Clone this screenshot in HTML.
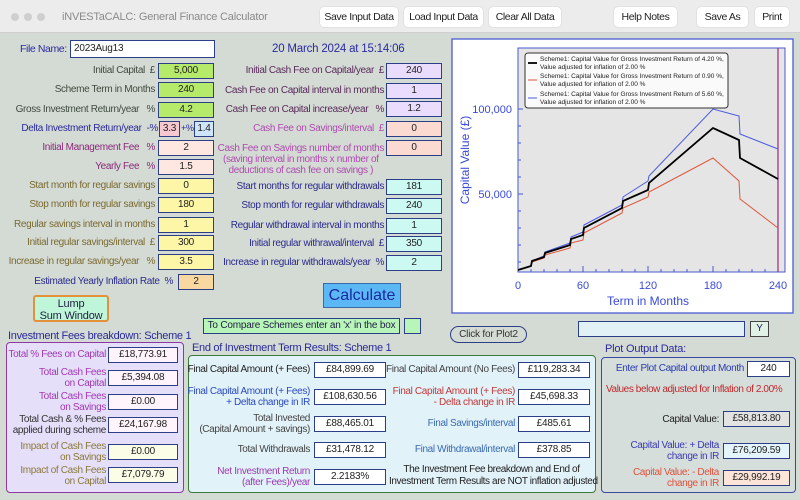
<!DOCTYPE html>
<html><head><meta charset="utf-8"><style>
*{box-sizing:border-box;margin:0;padding:0}
body{width:800px;height:500px;overflow:hidden;background:#d4dbd4;font-family:"Liberation Sans",Arial,sans-serif;font-size:10px;letter-spacing:-0.2px;position:relative;color:#333}
.a{position:absolute;white-space:nowrap}
.r{position:absolute;text-align:right;white-space:nowrap;line-height:12px;letter-spacing:-0.35px}
.b{position:absolute;border:1px solid #2c3f86;text-align:center;font-size:10px;line-height:14px;height:16px;color:#222}
.tb{position:absolute;top:7px;height:20px;background:#fff;border-radius:4px;box-shadow:0 0 1px #aaa;font-size:10.5px;line-height:20px;text-align:center;color:#222;white-space:nowrap;letter-spacing:-0.4px}
.lbl{color:#3f4a3f}
</style></head><body>
<div class="a" style="left:0;top:0;width:800px;height:33px;background:#ececec;border-bottom:1px solid #d0d0d0"></div>
<div class="a" style="left:11px;top:13px;width:8px;height:8px;border-radius:50%;background:#cfcfcf"></div>
<div class="a" style="left:24px;top:13px;width:8px;height:8px;border-radius:50%;background:#cfcfcf"></div>
<div class="a" style="left:37px;top:13px;width:8px;height:8px;border-radius:50%;background:#cfcfcf"></div>
<div class="a" style="left:62px;top:11px;font-size:11px;color:#8a8a8a">iNVESTaCALC:  General Finance Calculator</div>
<div class="tb" style="left:320px;width:78px">Save Input Data</div>
<div class="tb" style="left:404px;width:79px">Load Input Data</div>
<div class="tb" style="left:489px;width:72px">Clear All Data</div>
<div class="tb" style="left:614px;width:63px">Help Notes</div>
<div class="tb" style="left:697px;width:51px">Save As</div>
<div class="tb" style="left:755px;width:34px">Print</div>

<!-- left column -->
<div class="a" style="left:20px;top:43px;color:#2a2aa0;font-size:10.5px;letter-spacing:-0.4px">File Name:</div>
<div class="b" style="left:70px;top:40px;width:145px;height:18px;text-align:left;padding-left:3px;background:#fff;line-height:16px">2023Aug13</div>
<div class="r lbl" style="right:645px;top:65px">Initial Capital &nbsp;£</div><div class="b" style="left:158px;top:63px;width:56px;background:#b5ea6b">5,000</div>
<div class="r lbl" style="right:645px;top:84px">Scheme Term in Months</div><div class="b" style="left:158px;top:82px;width:56px;background:#b5ea6b">240</div>
<div class="r lbl" style="right:645px;top:104px">Gross Investment Return/year &nbsp;&nbsp;%</div><div class="b" style="left:158px;top:102px;width:56px;background:#b5ea6b">4.2</div>
<div class="r" style="right:642px;top:123px;color:#2a2a9a">Delta Investment Return/year &nbsp;-%</div><div class="b" style="left:159px;top:121px;width:21px;background:#f6c8cf">3.3</div><div class="a" style="left:181px;top:123px;color:#2a2a9a;font-size:9px">+%</div><div class="b" style="left:194px;top:121px;width:20px;background:#cfe5fa">1.4</div>
<div class="r" style="right:645px;top:142px;color:#8a2a7a">Initial Management Fee &nbsp;&nbsp;%</div><div class="b" style="left:158px;top:140px;width:56px;background:#fde7e0">2</div>
<div class="r" style="right:645px;top:161px;color:#8a2a7a">Yearly Fee &nbsp;&nbsp;%</div><div class="b" style="left:158px;top:159px;width:56px;background:#fde7e0">1.5</div>
<div class="r" style="right:645px;top:180px;color:#7a6a30">Start month for regular savings</div><div class="b" style="left:158px;top:178px;width:56px;background:#fdf6a6">0</div>
<div class="r" style="right:645px;top:199px;color:#7a6a30">Stop month for regular savings</div><div class="b" style="left:158px;top:197px;width:56px;background:#fdf6a6">180</div>
<div class="r" style="right:645px;top:219px;color:#7a6a30">Regular savings interval in months</div><div class="b" style="left:158px;top:217px;width:56px;background:#fdf6a6">1</div>
<div class="r" style="right:645px;top:237px;color:#7a6a30">Initial regular savings/interval &nbsp;£</div><div class="b" style="left:158px;top:235px;width:56px;background:#fdf6a6">300</div>
<div class="r" style="right:645px;top:256px;color:#7a6a30">Increase in regular savings/year &nbsp;&nbsp;%</div><div class="b" style="left:158px;top:254px;width:56px;background:#fdf6a6">3.5</div>
<div class="r" style="right:627px;top:276px;color:#2a2a8a">Estimated Yearly Inflation Rate &nbsp;%</div><div class="b" style="left:178px;top:274px;width:36px;background:#f8d7a0">2</div>
<div class="a" style="left:33px;top:295px;width:76px;height:27px;background:#bff5d8;border:2px solid #e3913a;border-radius:3px;text-align:center;line-height:12px;font-size:11px;color:#224;padding-top:1px">Lump<br>Sum Window</div>

<!-- middle column -->
<div class="a" style="left:272px;top:43px;font-size:11.5px;color:#2a2aa0">20 March 2024 at 15:14:06</div>
<div class="r" style="right:416px;top:65px;color:#5a2a5a">Initial Cash Fee on Capital/year &nbsp;£</div><div class="b" style="left:386px;top:63px;width:56px;background:#eadcfc">240</div>
<div class="r" style="right:416px;top:85px;color:#5a2a5a">Cash Fee on Capital interval in months</div><div class="b" style="left:386px;top:83px;width:56px;background:#eadcfc">1</div>
<div class="r" style="right:416px;top:104px;color:#5a2a5a">Cash Fee on Capital increase/year &nbsp;&nbsp;%</div><div class="b" style="left:386px;top:101px;width:56px;background:#eadcfc">1.2</div>
<div class="r" style="right:416px;top:123px;color:#b04ab0">Cash Fee on Savings/interval &nbsp;£</div><div class="b" style="left:386px;top:121px;width:56px;background:#fbdad2">0</div>
<div class="r" style="right:416px;top:143px;color:#b04ab0;text-align:center;line-height:11px">Cash Fee on Savings number of months<br>(saving interval in months x number of<br>deductions of cash fee on savings )</div><div class="b" style="left:386px;top:140px;width:56px;background:#fbdad2">0</div>
<div class="r" style="right:416px;top:181px;color:#2a2a8a">Start months for regular withdrawals</div><div class="b" style="left:386px;top:179px;width:56px;background:#cdf9f3">181</div>
<div class="r" style="right:416px;top:200px;color:#2a2a8a">Stop month for regular withdrawals</div><div class="b" style="left:386px;top:198px;width:56px;background:#cdf9f3">240</div>
<div class="r" style="right:416px;top:220px;color:#2a2a8a">Regular withdrawal interval in months</div><div class="b" style="left:386px;top:218px;width:56px;background:#cdf9f3">1</div>
<div class="r" style="right:416px;top:238px;color:#2a2a8a">Initial regular withrawal/interval &nbsp;£</div><div class="b" style="left:386px;top:236px;width:56px;background:#cdf9f3">350</div>
<div class="r" style="right:416px;top:257px;color:#2a2a8a">Increase in regular withdrawals/year &nbsp;%</div><div class="b" style="left:386px;top:255px;width:56px;background:#cdf9f3">2</div>
<div class="a" style="left:323px;top:283px;width:78px;height:25px;background:#5cb8f5;border:1px solid #3a6aa8;text-align:center;font-size:16px;line-height:23px;color:#1a2aa0;letter-spacing:0">Calculate</div>
<div class="a" style="left:203px;top:318px;width:197px;height:16px;background:#b8f5b8;border:1px solid #2c3f86;text-align:center;line-height:14px;color:#224">To Compare Schemes enter an 'x' in the box</div>
<div class="a" style="left:404px;top:318px;width:17px;height:16px;background:#b8f5b8;border:1px solid #2c3f86"></div>
<div class="a" style="left:450px;top:326px;width:77px;height:17px;border:1px solid #2c3f86;border-radius:9px;text-align:center;line-height:15px;color:#333">Click for Plot2</div>
<div class="a" style="left:578px;top:321px;width:167px;height:16px;background:#e1f1f5;border:1px solid #2c3f86"></div>
<div class="a" style="left:750px;top:321px;width:19px;height:16px;background:#e1f1e5;border:1px solid #444;text-align:center;line-height:14px;color:#226">Y</div>

<!-- chart -->
<svg class="a" style="left:0;top:0" width="800" height="500">
<rect x="452" y="39" width="341" height="274" fill="#fff" stroke="#4a5ad0" stroke-width="1.3"/>
<rect x="518" y="48" width="267" height="224" fill="#e5e5e5" stroke="#4a5ad0" stroke-width="1"/>
<g stroke="#4a5ad0" stroke-width="1">
<line x1="518" y1="109" x2="523" y2="109"/><line x1="518" y1="126" x2="521" y2="126"/><line x1="518" y1="143" x2="521" y2="143"/><line x1="518" y1="160" x2="521" y2="160"/><line x1="518" y1="177" x2="521" y2="177"/><line x1="518" y1="194" x2="523" y2="194"/><line x1="518" y1="211" x2="521" y2="211"/><line x1="518" y1="228" x2="521" y2="228"/><line x1="518" y1="245" x2="521" y2="245"/><line x1="518" y1="262" x2="521" y2="262"/>
<line x1="583" y1="272" x2="583" y2="266"/><line x1="648" y1="272" x2="648" y2="266"/><line x1="713" y1="272" x2="713" y2="266"/>
<line x1="531" y1="272" x2="531" y2="269"/><line x1="544" y1="272" x2="544" y2="269"/><line x1="557" y1="272" x2="557" y2="269"/><line x1="570" y1="272" x2="570" y2="269"/><line x1="596" y1="272" x2="596" y2="269"/><line x1="609" y1="272" x2="609" y2="269"/><line x1="622" y1="272" x2="622" y2="269"/><line x1="635" y1="272" x2="635" y2="269"/><line x1="661" y1="272" x2="661" y2="269"/><line x1="674" y1="272" x2="674" y2="269"/><line x1="687" y1="272" x2="687" y2="269"/><line x1="700" y1="272" x2="700" y2="269"/><line x1="726" y1="272" x2="726" y2="269"/><line x1="739" y1="272" x2="739" y2="269"/><line x1="752" y1="272" x2="752" y2="269"/><line x1="765" y1="272" x2="765" y2="269"/>
</g>
<line x1="778" y1="48" x2="778" y2="272" stroke="#9a2a7a" stroke-width="1.2"/>
<polyline fill="none" stroke="#e0563a" stroke-width="1" points="518,270 531,266 532,262 544,258 545,255 570,248 571,243 583,240 584,233 622,213 623,208 648,197 649,192 713,158 739,181 740,199 778,228"/>
<polyline fill="none" stroke="#4a5ae0" stroke-width="1" points="518,270 531,266 532,261 544,256 545,252 570,243 571,237 583,232 584,225 622,205 623,197 648,181 649,176 713,109 739,116 740,134 778,149"/>
<polyline fill="none" stroke="#000" stroke-width="1.8" points="518,270 531,266 532,261 544,257 545,253 570,245 571,239 583,235 584,228 622,208 623,201 648,190 649,183 713,128 739,140 740,158 778,179"/>
<rect x="525" y="53" width="203" height="55" rx="3" fill="#fafafa" stroke="#333" stroke-width="1"/>
<line x1="528" y1="63" x2="537" y2="63" stroke="#000" stroke-width="1.8"/>
<line x1="528" y1="80" x2="537" y2="80" stroke="#e0563a"/>
<line x1="528" y1="98" x2="537" y2="98" stroke="#4a5ae0"/>
<g font-family="Liberation Sans, Arial, sans-serif" font-size="6.5" fill="#222" letter-spacing="0">
<text x="540" y="61">Scheme1: Capital Value for Gross Investment Return of 4.20 %,</text><text x="540" y="69">Value adjusted for inflation of 2.00 %</text>
<text x="540" y="78">Scheme1: Capital Value for Gross Investment Return of 0.90 %,</text><text x="540" y="86">Value adjusted for inflation of 2.00 %</text>
<text x="540" y="96">Scheme1: Capital Value for Gross Investment Return of 5.60 %,</text><text x="540" y="104">Value adjusted for inflation of 2.00 %</text>
</g>
<g font-family="Liberation Sans, Arial, sans-serif" font-size="11" fill="#3a4ad8" letter-spacing="0">
<text x="512" y="113" text-anchor="end">100,000</text><text x="512" y="198" text-anchor="end">50,000</text>
<text x="518" y="289" text-anchor="middle">0</text><text x="583" y="289" text-anchor="middle">60</text><text x="648" y="289" text-anchor="middle">120</text><text x="713" y="289" text-anchor="middle">180</text><text x="778" y="289" text-anchor="middle">240</text>
<text x="648" y="305" text-anchor="middle" font-size="12">Term in Months</text>
<text transform="translate(469,160) rotate(-90)" text-anchor="middle" font-size="12">Capital Value  (£)</text>
</g>
</svg>

<!-- fees panel -->
<div class="a" style="left:8px;top:330px;font-size:11px;color:#2a2a9a;letter-spacing:-0.3px">Investment Fees breakdown:  Scheme 1</div>
<div class="a" style="left:6px;top:342px;width:178px;height:151px;background:#e6dffa;border:1.5px solid #8a3aa0;border-radius:4px"></div>
<div class="r" style="right:694px;top:349px;color:#a03ab0">Total % Fees on Capital</div><div class="b" style="left:108px;top:347px;width:70px;background:#fff4fb">£18,773.91</div>
<div class="r" style="right:694px;top:367px;color:#a03ab0;line-height:11px">Total Cash Fees<br>on Capital</div><div class="b" style="left:108px;top:370px;width:70px;background:#fff4fb">£5,394.08</div>
<div class="r" style="right:694px;top:391px;color:#a03ab0;line-height:11px">Total Cash Fees<br>on Savings</div><div class="b" style="left:108px;top:394px;width:70px;background:#fff4fb">£0.00</div>
<div class="r" style="right:694px;top:414px;color:#333;line-height:11px">Total Cash &amp; % Fees<br>applied during scheme</div><div class="b" style="left:108px;top:417px;width:70px;background:#fff4fb">£24,167.98</div>
<div class="r" style="right:694px;top:441px;color:#8a7a3a;line-height:11px">Impact of Cash Fees<br>on Savings</div><div class="b" style="left:108px;top:444px;width:70px;background:#fbfde6">£0.00</div>
<div class="r" style="right:694px;top:465px;color:#8a7a3a;line-height:11px">Impact of Cash Fees<br>on Capital</div><div class="b" style="left:108px;top:467px;width:70px;background:#fbfde6">£7,079.79</div>

<!-- results panel -->
<div class="a" style="left:192px;top:342px;font-size:11px;color:#2a2a9a;letter-spacing:-0.3px">End of Investment Term Results:  Scheme 1</div>
<div class="a" style="left:188px;top:355px;width:408px;height:138px;background:#e2f2f9;border:1.5px solid #3c7a3c;border-radius:4px"></div>
<div class="r" style="right:490px;top:364px;color:#222">Final Capital Amount (+ Fees)</div><div class="b" style="left:314px;top:362px;width:72px;background:#fff">£84,899.69</div>
<div class="r" style="right:490px;top:386px;color:#2a4ac0;line-height:11px">Final Capital Amount (+ Fees)<br>+ Delta change in IR</div><div class="b" style="left:314px;top:389px;width:72px;background:#fff">£108,630.56</div>
<div class="r" style="right:490px;top:413px;color:#444;line-height:11px">Total Invested<br>(Capital Amount + savings)</div><div class="b" style="left:314px;top:416px;width:72px;background:#fff">£88,465.01</div>
<div class="r" style="right:490px;top:444px;color:#444">Total Withdrawals</div><div class="b" style="left:314px;top:442px;width:72px;background:#fff">£31,478.12</div>
<div class="r" style="right:490px;top:466px;color:#9a3ab0;line-height:11px">Net Investment Return<br>(after Fees)/year</div><div class="b" style="left:314px;top:469px;width:72px;background:#fff">2.2183%</div>
<div class="r" style="right:285px;top:364px;color:#444">Final Capital Amount (No Fees)</div><div class="b" style="left:518px;top:362px;width:72px;background:#fff">£119,283.34</div>
<div class="r" style="right:285px;top:386px;color:#c03a3a;line-height:11px">Final Capital Amount (+ Fees)<br>- Delta change in IR</div><div class="b" style="left:518px;top:389px;width:72px;background:#fff">£45,698.33</div>
<div class="r" style="right:285px;top:418px;color:#3a6ab0">Final Savings/interval</div><div class="b" style="left:518px;top:416px;width:72px;background:#fff">£485.61</div>
<div class="r" style="right:285px;top:444px;color:#3a6ab0">Final Withdrawal/interval</div><div class="b" style="left:518px;top:442px;width:72px;background:#fff">£378.85</div>
<div class="a" style="left:389px;top:464px;width:205px;color:#222;line-height:12px;text-align:center;letter-spacing:-0.4px">The Investment Fee breakdown and End of<br>Investment Term Results are NOT inflation adjusted</div>

<!-- plot output -->
<div class="a" style="left:605px;top:343px;font-size:11px;color:#2a2a9a">Plot Output Data:</div>
<div class="a" style="left:601px;top:357px;width:195px;height:136px;background:#d6dedc;border:1.5px solid #3a4aa0;border-radius:4px"></div>
<div class="r" style="right:56px;top:363px;color:#2a3ab0">Enter Plot Capital output Month</div><div class="b" style="left:747px;top:361px;width:43px;background:#fff">240</div>
<div class="a" style="left:606px;top:384px;color:#c0282a;letter-spacing:-0.4px">Values below adjusted for Inflation of 2.00%</div>
<div class="r" style="right:81px;top:414px;color:#222">Capital Value:</div><div class="b" style="left:723px;top:411px;width:67px;background:#e3e3e3">£58,813.80</div>
<div class="r" style="right:81px;top:440px;color:#3a3ab0;line-height:11px">Capital Value: + Delta<br>change in IR</div><div class="b" style="left:723px;top:443px;width:67px;background:#e3f4fb">£76,209.59</div>
<div class="r" style="right:81px;top:467px;color:#e0503a;line-height:11px">Capital Value: - Delta<br>change in IR</div><div class="b" style="left:723px;top:470px;width:67px;background:#fde4d8">£29,992.19</div>
</body></html>
